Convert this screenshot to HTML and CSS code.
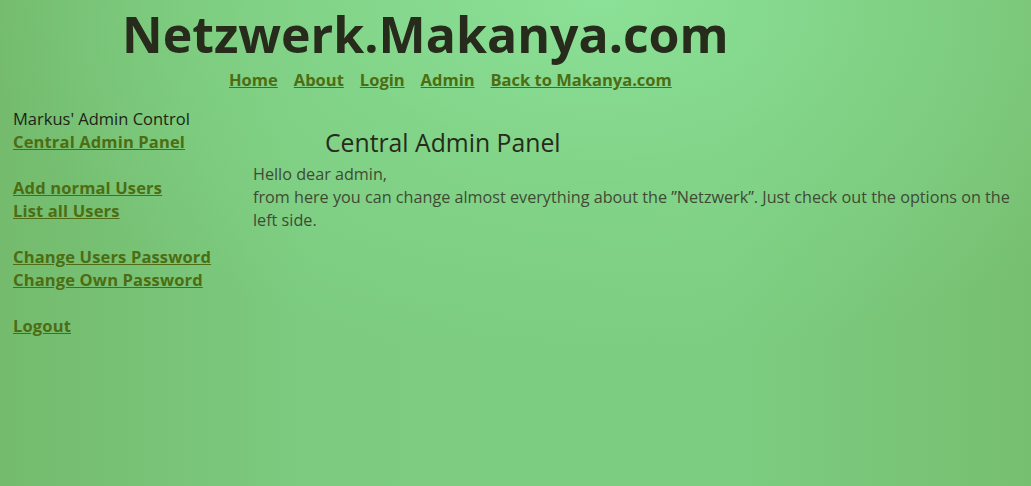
FILE: index.html
```html
<!DOCTYPE html>
<html lang="de">
<head>
<meta charset="utf-8">
<title>Netzwerk.Makanya.com</title>
<link rel="stylesheet" href="styles.css">
</head>
<body>
<header class="site-header">
  <h1 class="site-title">Netzwerk.Makanya.com</h1>
  <nav class="top-nav">
    <a href="#">Home</a>
    <a href="#">About</a>
    <a href="#">Login</a>
    <a href="#">Admin</a>
    <a href="#">Back to Makanya.com</a>
  </nav>
</header>
<div class="layout">
  <aside class="sidebar">
    <div class="side-title">Markus' Admin Control</div>
    <a href="#">Central Admin Panel</a>
    <div class="spacer"></div>
    <a href="#">Add normal Users</a>
    <a href="#">List all Users</a>
    <div class="spacer"></div>
    <a href="#">Change Users Password</a>
    <a href="#">Change Own Password</a>
    <div class="spacer"></div>
    <a href="#">Logout</a>
  </aside>
  <main class="content">
    <h2 class="content-title">Central Admin Panel</h2>
    <p class="content-text">Hello dear admin,<br>from here you can change almost everything about the ”Netzwerk”. Just check out the options on the left side.</p>
  </main>
</div>
</body>
</html>
```

FILE: styles.css
```css
html, body {
  margin: 0;
  padding: 0;
  height: 100%;
}
body {
  font-family: "Open Sans", "DejaVu Sans", sans-serif;
  font-size: 16.5px;
  line-height: 23px;
  color: #262d1c;
  background-color: #7fd086;
  background-image:
    radial-gradient(ellipse 60% 75% at 58% 0%, rgba(140, 226, 152, 0.95) 0%, rgba(134, 218, 142, 0.6) 45%, rgba(120, 200, 125, 0) 100%),
    linear-gradient(90deg, #74bb6d 0%, #7ccb80 30%, #7ccd82 70%, #77bf70 100%);
  min-height: 486px;
}
a {
  color: #4c6d12;
  font-weight: bold;
  text-decoration: underline;
}
.site-header {
  padding-left: 122px;
}
.site-title {
  margin: 0;
  font-size: 50px;
  line-height: 68px;
  font-weight: bold;
  color: #262b1b;
}
.top-nav {
  display: flex;
  gap: 16px;
  padding-left: 107px;
  height: 23px;
}
.layout {
  display: flex;
  margin-top: 16px;
}
.sidebar {
  width: 240px;
  padding-left: 13px;
  display: flex;
  flex-direction: column;
  align-items: flex-start;
  flex-shrink: 0;
}
.sidebar a {
  letter-spacing: 0.15px;
}
.side-title {
  color: #1e2416;
}
.spacer {
  height: 23px;
}
.content {
  flex: 1;
  padding-right: 8px;
  padding-top: 21px;
}
.content-title {
  margin: 0 0 5px 72px;
  font-size: 24.75px;
  line-height: 30px;
  font-weight: normal;
  color: #262b1b;
}
.content-text {
  margin: 0;
  font-size: 16.2px;
  color: #3f4a34;
}
```
